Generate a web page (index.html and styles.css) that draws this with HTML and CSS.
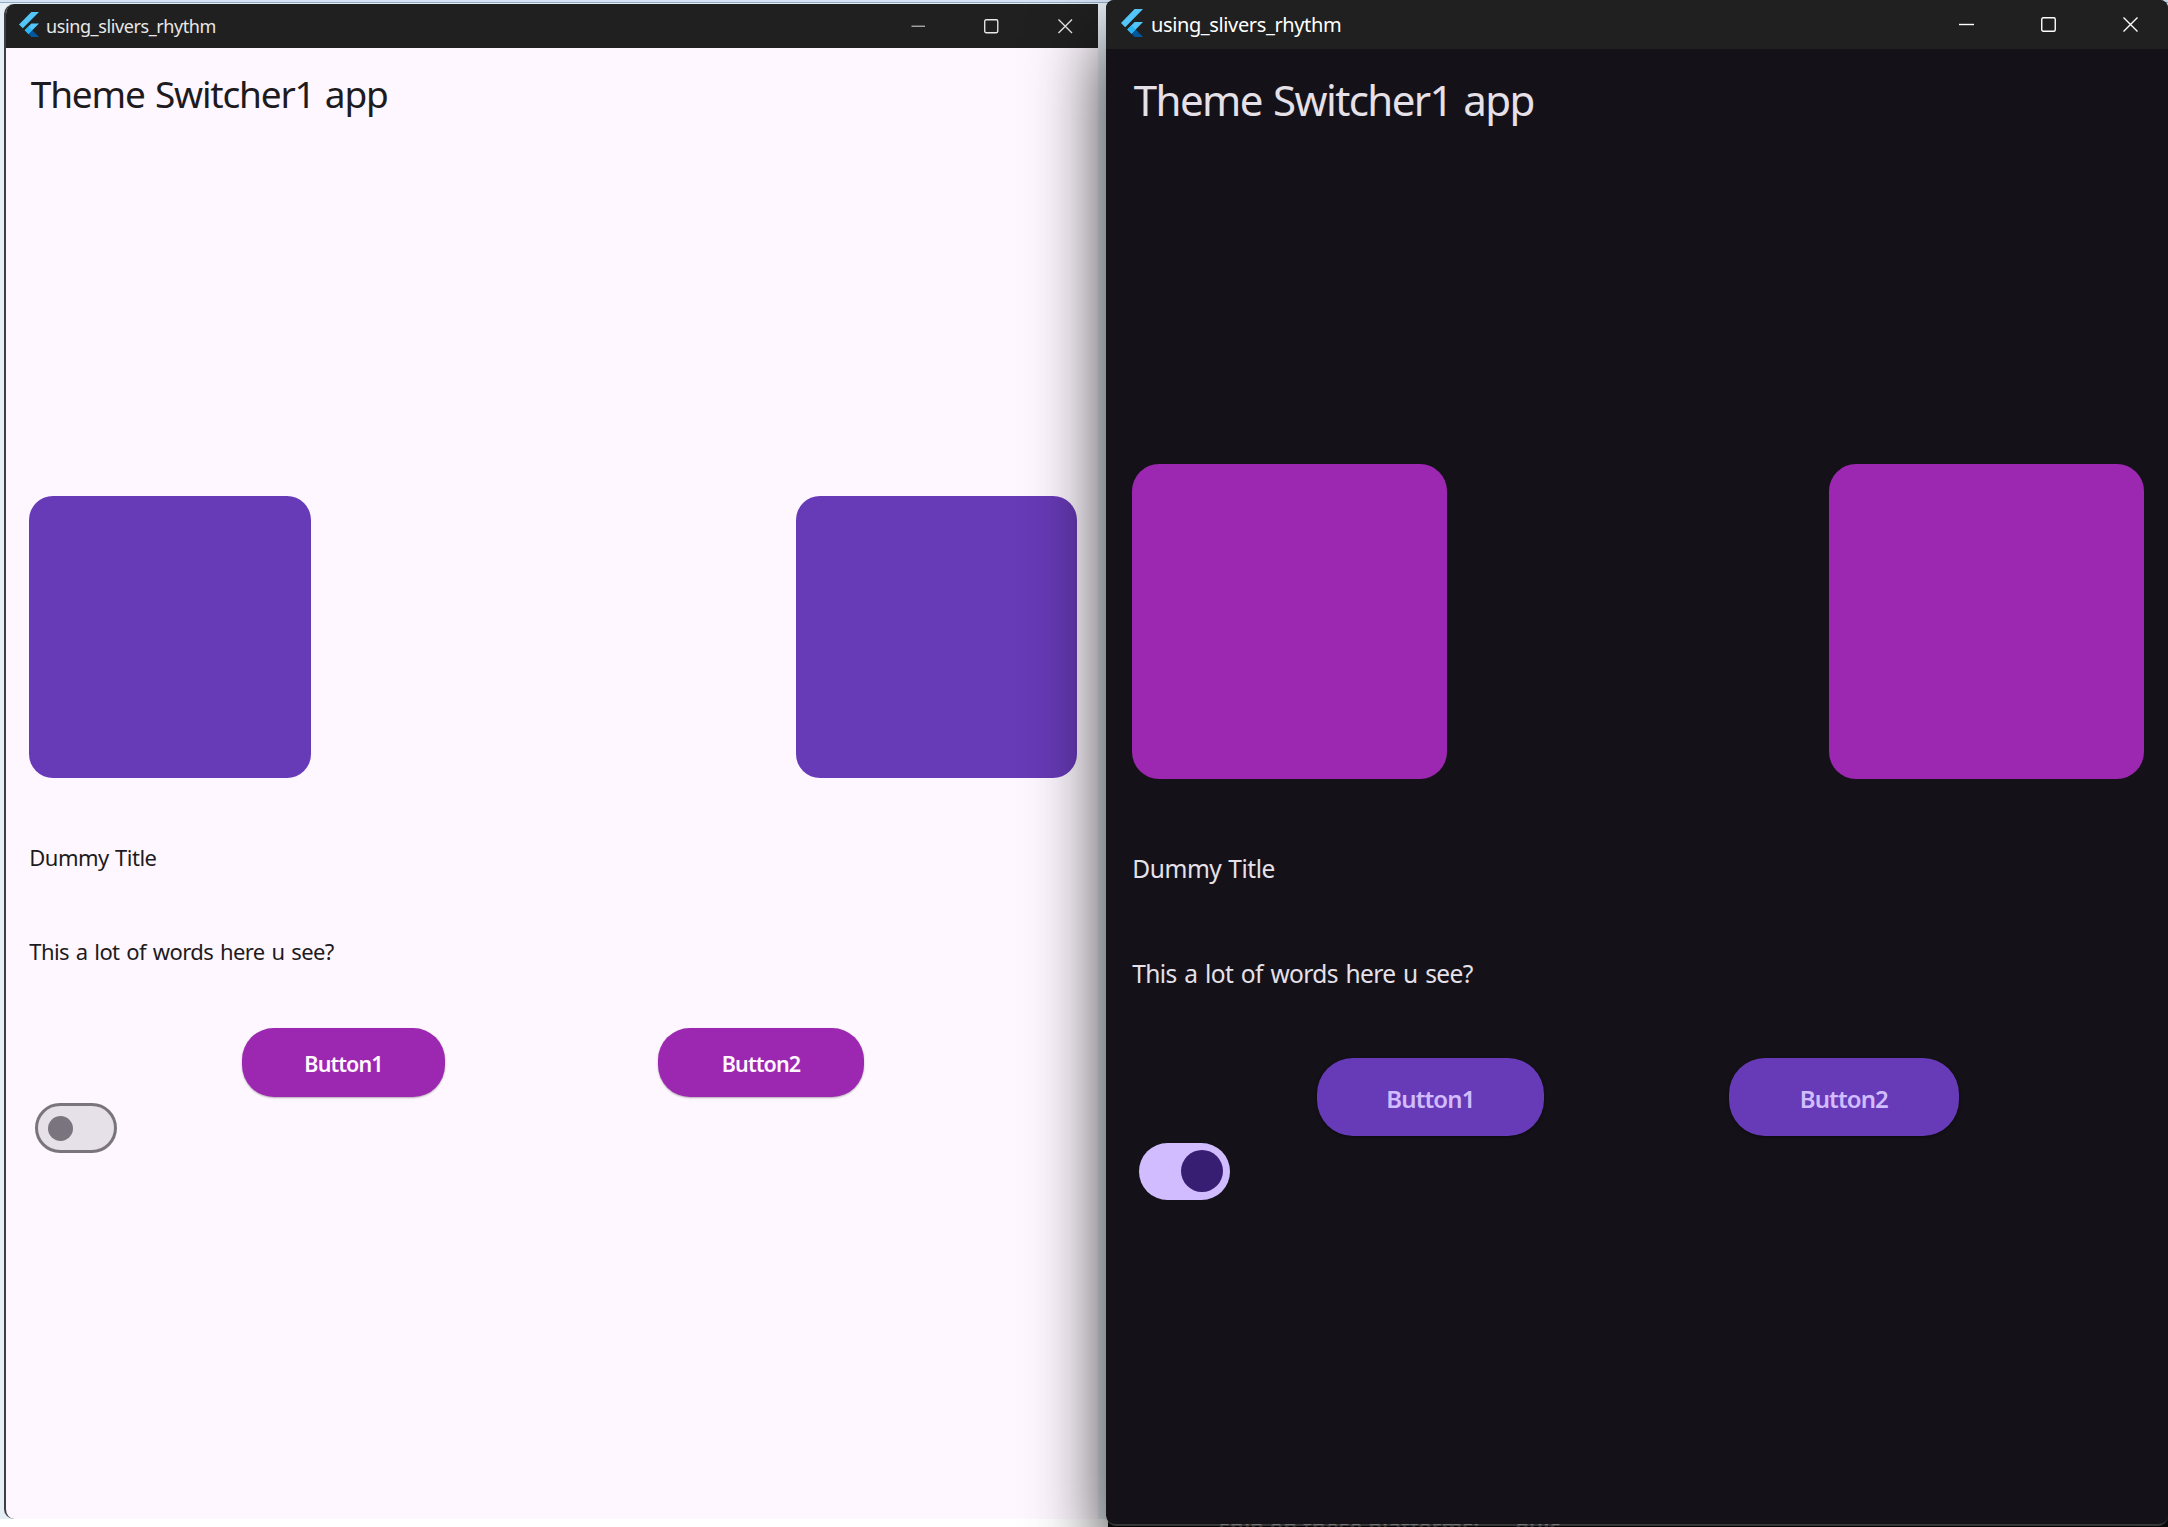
FILE: index.html
```html
<!DOCTYPE html>
<html lang="en">
<head>
<meta charset="utf-8">
<title>using_slivers_rhythm</title>
<link rel="stylesheet" href="styles.css">
</head>
<body>
<main class="desktop">
  <div class="backdrop"><span class="page-text">ship on these platforms:</span><span class="page-text">guic</span></div>

  <section class="window light">
    <header class="titlebar">
      <svg class="logo" viewBox="2.3 0 19.4 24" preserveAspectRatio="none"><path fill="#54c5f8" d="M14.3 0 2.3 12 6 15.7 21.7 0zM14.3 11.07 7.86 17.53l3.7 3.7 10.14-10.16z"/><path fill="#01579b" d="m11.55 21.22 3.7-3.7L21.7 24h-7.37z"/><path fill="#29b6f6" d="m7.86 17.53 3.69-3.69 3.7 3.69-3.7 3.69z"/></svg>
      <span class="caption">using_slivers_rhythm</span>
      <nav class="controls">
        <svg class="control minimize" viewBox="0 0 15 15"><path d="M.5 7.5h14"/></svg>
        <svg class="control" viewBox="0 0 15 15"><rect x=".75" y=".75" width="13.5" height="13.5" rx="1.5"/></svg>
        <svg class="control" viewBox="0 0 15 15"><path d="m.5.5 14 14m0-14-14 14"/></svg>
      </nav>
    </header>
    <div class="content">
      <h1 class="heading">Theme Switcher1 app</h1>
      <div class="tiles"><div class="tile"></div><div class="tile"></div></div>
      <p class="text title">Dummy Title</p>
      <p class="text words">This a lot of words here u see?</p>
      <div class="buttons"><button class="button first">Button1</button><button class="button second">Button2</button></div>
      <div class="switch"><div class="thumb"></div></div>
    </div>
  </section>

  <section class="window dark">
    <header class="titlebar">
      <svg class="logo" viewBox="2.3 0 19.4 24" preserveAspectRatio="none"><path fill="#54c5f8" d="M14.3 0 2.3 12 6 15.7 21.7 0zM14.3 11.07 7.86 17.53l3.7 3.7 10.14-10.16z"/><path fill="#01579b" d="m11.55 21.22 3.7-3.7L21.7 24h-7.37z"/><path fill="#29b6f6" d="m7.86 17.53 3.69-3.69 3.7 3.69-3.7 3.69z"/></svg>
      <span class="caption">using_slivers_rhythm</span>
      <nav class="controls">
        <svg class="control" viewBox="0 0 15 15"><path d="M0 7.5h15"/></svg>
        <svg class="control" viewBox="0 0 15 15"><rect x=".75" y=".75" width="13.5" height="13.5" rx="1.5"/></svg>
        <svg class="control" viewBox="0 0 15 15"><path d="m.5.5 14 14m0-14-14 14"/></svg>
      </nav>
    </header>
    <div class="content">
      <h1 class="heading">Theme Switcher1 app</h1>
      <div class="tiles"><div class="tile"></div><div class="tile"></div></div>
      <p class="text title">Dummy Title</p>
      <p class="text words">This a lot of words here u see?</p>
      <div class="buttons"><button class="button first">Button1</button><button class="button second">Button2</button></div>
      <div class="switch"><div class="thumb"></div></div>
    </div>
  </section>
</main>
</body>
</html>
```

FILE: styles.css
```css
* { box-sizing: border-box; }

body {
  margin: 0;
  font-family: "Noto Sans", "Open Sans", sans-serif;
}

.desktop {
  position: relative;
  width: 2168px;
  height: 1527px;
  overflow: hidden;
  background: linear-gradient(#d5e3f5 0 2px, #93a9c4 2px 3px, #e6eff5 3px 1519px, #fff 1519px);
}

/* Page behind the dark window, visible only along its bottom edge */
.backdrop {
  position: absolute;
  left: 1108px;
  top: 1513px;
  width: 1060px;
  height: 14px;
  padding-left: 111px;
  overflow: hidden;
  display: flex;
  gap: 36px;
  background: #0d0d0d;
  z-index: 2;
}

.page-text {
  font-size: 22px;
  line-height: 26px;
  font-weight: 600;
  color: #858585;
}

.window {
  position: absolute;
  display: flex;
  flex-direction: column;
  overflow: hidden;
}

.light {
  left: 4px;
  top: 4px;
  width: 1094px;
  height: 1515px;
  border-left: 2px solid #3f3e46;
  border-radius: 10px 0 0 10px;
  background: #fef7ff;
  color: #1d1b20;
}

.dark {
  left: 1106px;
  top: 0;
  width: 1062px;
  height: 1526px;
  border-bottom: 2px solid rgba(100, 100, 100, .5);
  border-radius: 8px 8px 10px 10px;
  background: #141218;
  background-clip: padding-box;
  color: #e6e0e9;
  box-shadow: 0 36px 75px rgba(0, 0, 0, .8);
  z-index: 3;
}

.titlebar {
  flex: none;
  display: flex;
  align-items: center;
  background: #202020;
  color: #fff;
}

.light .titlebar { height: 44px; padding: 0 26px 0 13px; color: #e8e8e8; }
.dark .titlebar { height: 49px; padding: 0 30px 0 15px; }

.logo { flex: none; }
.light .logo { width: 20px; height: 25px; margin: -3px 7px 0 0; }
.dark .logo { width: 22px; height: 28px; margin: -3px 8px 0 0; }

.caption { white-space: nowrap; }
.light .caption { font-size: 18px; letter-spacing: -.4px; margin-top: -1px; }
.dark .caption { font-size: 20px; letter-spacing: -.38px; margin-top: -1px; }

.controls { display: flex; margin-left: auto; }
.control { fill: none; stroke: currentColor; stroke-width: 1.4; overflow: visible; }
.light .controls { gap: 59px; }
.dark .controls { gap: 67px; }
.light .control { width: 14.5px; height: 14.5px; }
.light .minimize { opacity: .7; }
.dark .control { width: 15px; height: 15px; }

.content { display: flex; flex-direction: column; }
.light .content { padding: 0 21px 0 23.3px; }
.dark .content { padding: 0 24px 0 26.3px; }

.heading, .text { margin: 0; font-weight: 400; white-space: nowrap; }

.light .heading { height: 448px; padding: 20.5px 0 0 1.5px; font-size: 37px; line-height: 50px; letter-spacing: -1.2px; word-spacing: 2px; }
.dark .heading { height: 415.3px; padding: 23px 0 0 1.5px; font-size: 42px; line-height: 56px; letter-spacing: -1.6px; word-spacing: 2px; }

.tiles { display: flex; justify-content: space-between; }
.light .tile { width: 281.5px; height: 281.5px; border-radius: 24px; background: #673ab7; }
.dark .tile { width: 315px; height: 315px; border-radius: 27px; background: #9c27b0; }

.light .text { height: 94px; font-size: 22px; line-height: 30px; }
.dark .text { height: 105px; font-size: 24.5px; line-height: 34px; }
.light .title { margin-top: 64px; letter-spacing: -.5px; word-spacing: 1px; }
.dark .title { margin-top: 72.5px; letter-spacing: -.45px; word-spacing: 1px; }
.light .words { letter-spacing: -.6px; word-spacing: 1.7px; height: 92px; }
.dark .words { letter-spacing: -.6px; word-spacing: 1.8px; height: 101.7px; }

.buttons { display: flex; justify-content: space-evenly; }
.button { border: 0; padding: 2px 0 0; font-family: inherit; font-weight: 600; }
.light .button { height: 69.5px; border-radius: 32px; background: #9c27b0; color: #fef7ff; font-size: 21.5px; letter-spacing: -.9px; box-shadow: 0 1px 2px rgba(0, 0, 0, .3); }
.dark .button { height: 77.5px; padding-top: 3px; border-radius: 36px; background: #673ab7; color: #d0bcff; font-size: 24px; letter-spacing: -.9px; box-shadow: 0 1px 3px rgba(0, 0, 0, .5); }
.light .first { width: 203px; }
.light .second { width: 206.5px; }
.dark .first { width: 226.7px; }
.dark .second { width: 230.7px; }

.switch { display: flex; align-items: center; border-radius: 29px; }
.thumb { border-radius: 50%; }
.light .switch { width: 81.7px; height: 50.3px; margin: 6px 0 0 5.7px; padding-left: 10px; border: 3px solid #79747e; background: #e6e0e9; }
.light .thumb { width: 25px; height: 25px; background: #79747e; }
.dark .switch { width: 91px; height: 56.3px; margin: 7.3px 0 0 6.7px; padding-left: 42px; background: #d0bcff; }
.dark .thumb { width: 42px; height: 42px; background: #381e72; }
```
